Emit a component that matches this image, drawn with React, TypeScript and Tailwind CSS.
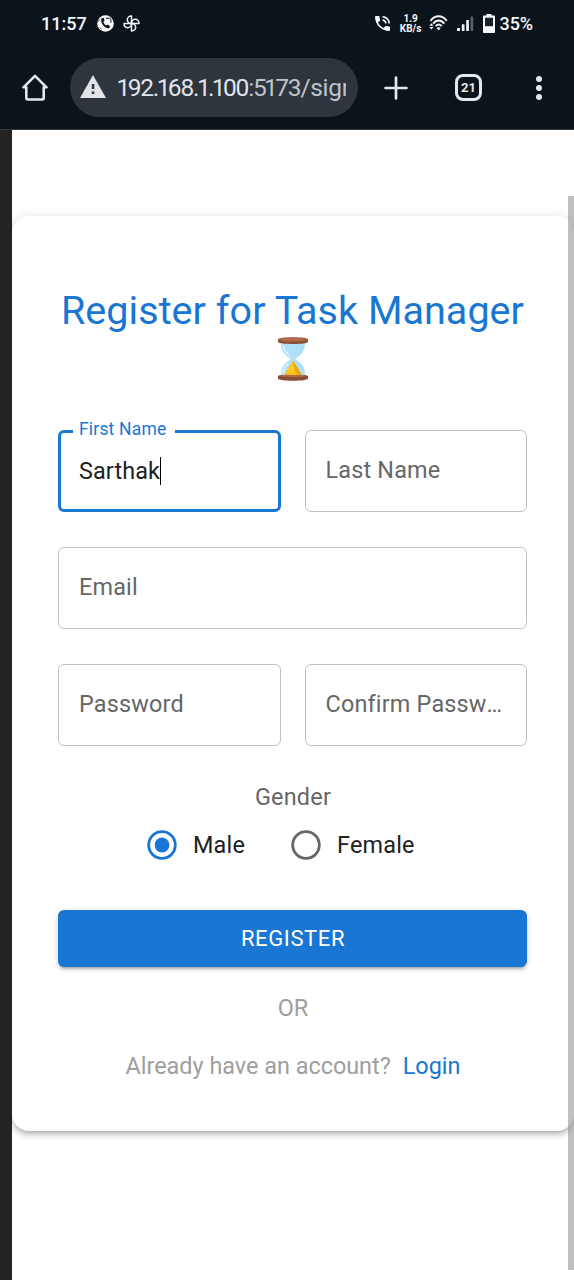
import React from "react";

function StatusBar() {
  return (
    <div className="flex h-[48px] items-center pl-[41px] pr-[41px] text-[#f4f6f8]">
      <span className="text-[18px] font-medium leading-none">11:57</span>
      <svg className="ml-[10px] -mt-px" width="17" height="17" viewBox="0 0 17 17">
        <circle cx="8.5" cy="8.5" r="8.3" fill="#f8fafb" />
        <path d="M4.300 3.500c-.8 4.600 2.500 9.200 7.500 10l1.400-2.200-2.600-1.800-1.400.9C7.700 9.500 6.800 8.200 6.400 6.900l1.200-1.100-1-3z" fill="#0c141b" />
        <path d="M8.700 3.200h3.600c1 0 1.600.7 1.600 1.600v2.900" fill="none" stroke="#0c141b" strokeWidth="1" />
        <path d="M1.500 6.500l1.200-2M3 12.600l1.500 1.600" stroke="#0c141b" strokeWidth=".8" />
      </svg>
      <svg className="ml-[9px] -mt-px" width="17" height="17" viewBox="0 0 17 17" fill="none" stroke="#f4f6f8" strokeWidth="1.5" strokeLinejoin="round">
        <path d="M8.500 8.500V1C5.800 1 4.300 2.900 4.300 4.700c0 1.900 1.700 3.800 4.200 3.800z" />
        <path d="M8.500 8.500H16c0-2.700-1.900-4.200-3.700-4.200-1.900 0-3.800 1.700-3.800 4.200z" />
        <path d="M8.500 8.500V16c2.700 0 4.200-1.900 4.200-3.700 0-1.900-1.700-3.800-4.200-3.800z" />
        <path d="M8.500 8.500H1c0 2.700 1.900 4.200 3.700 4.200 1.900 0 3.800-1.700 3.800-4.200z" />
      </svg>
      <svg className="ml-auto -mt-px" width="15" height="15" viewBox="3 3 18 18" fill="#f4f6f8">
        <path d="M20 15.500c-1.250 0-2.450-.2-3.570-.57-.1-.03-.21-.05-.31-.05-.26 0-.51.1-.71.29l-2.200 2.200c-2.830-1.440-5.150-3.750-6.590-6.590l2.200-2.210c.28-.26.36-.65.25-1C8.700 6.450 8.500 5.250 8.500 4c0-.55-.45-1-1-1H4c-.55 0-1 .45-1 1 0 9.390 7.610 17 17 17 .55 0 1-.45 1-1v-3.500c0-.55-.45-1-1-1zM19 12h2c0-4.970-4.030-9-9-9v2c3.870 0 7 3.130 7 7zm-4 0h2c0-2.760-2.240-5-5-5v2c1.660 0 3 1.340 3 3z" />
      </svg>
      <span className="ml-[10px] flex w-[22px] flex-col items-center text-[10px] font-bold leading-[10.500px]">
        <span>1.9</span>
        <span>KB/s</span>
      </span>
      <svg className="ml-[7px] -mt-px" width="19" height="17" viewBox="0 0 19 17" fill="none" stroke="#f4f6f8" strokeWidth="2">
        <path d="M1.500 5.800C6-.2 13.200-.2 17.700 5.800" />
        <path d="M4.100 8.600c3.400-4.100 7.800-4.100 11.200 0" />
        <path d="M6.800 11.200c1.900-2.200 4-2.200 5.900 0" />
        <path d="M9.700 15.400l-2-2.500c1.200-.9 2.800-.9 4 0z" fill="#f4f6f8" stroke="none" />
        <path d="M.3 10.700l2.100-2.500 2.100 2.500zM.3 12l2.100 2.500L4.500 12z" fill="#f4f6f8" stroke="none" />
      </svg>
      <svg className="ml-[9px]" width="17" height="16" viewBox="0 0 17 16" fill="#f4f6f8">
        <rect y="12" width="3" height="3" rx=".5" />
        <rect x="4.800" y="8.300" width="2.700" height="6.700" rx=".5" />
        <rect x="9.200" y="4" width="2.700" height="11" rx=".5" />
        <rect x="13.600" y=".5" width="2.600" height="14.500" rx=".5" fill="#59616a" />
      </svg>
      <svg className="ml-[9px] -mt-px" width="12" height="19" viewBox="0 0 12 19">
        <path d="M3.500 0h5v1.500H11c.6 0 1 .4 1 1V18c0 .6-.4 1-1 1H1c-.6 0-1-.4-1-1V2.500c0-.6.4-1 1-1h2.500z" fill="#f8fafb" />
        <rect x="2" y="3.700" width="8" height="8.500" fill="#17212a" />
      </svg>
      <span className="ml-[5px] text-[18px] font-medium leading-none tracking-[-0.1px]">35%</span>
    </div>
  );
}

function One() {
  return <span className="-ml-[1.500px] -mr-[1.500px]">1</span>;
}

function Toolbar() {
  return (
    <div className="flex h-[81px] items-start pl-[22px] pr-[32px] pt-[10px]">
      <div className="flex h-[59px] items-center">
        <svg width="26" height="27" viewBox="0 0 26 27" fill="none" stroke="#e3e7ee" strokeWidth="2.600" strokeLinejoin="round">
          <path d="M1.500 13.300L13 1.800l11.500 11.500h-2.800v10.800c0 .8-.6 1.400-1.400 1.400H5.700c-.8 0-1.400-.6-1.400-1.400V13.300z" />
        </svg>
      </div>
      <div className="ml-[22px] flex h-[59px] w-[288px] items-center rounded-full bg-[#2e353c] pl-[10px]">
        <svg className="-mt-[2px]" width="26" height="23" viewBox="0 0 26 23">
          <path d="M13 0l13 23H0z" fill="#e1e3e7" />
          <path d="M11.800 9h2.500v5h-2.500zM11.800 16.400h2.500V19h-2.500z" fill="#2e353c" />
        </svg>
        <div className="ml-[11px] w-[229px] overflow-hidden whitespace-nowrap pl-px text-[24.500px] leading-[34px] tracking-[-1.150px] text-[#e0e4ee]">
          <One />92.<One />68.<One />.<One />00<span className="text-[#bfc4cc]">:5<One />73<span className="tracking-[-0.3px]">/sign</span></span>
        </div>
      </div>
      <div className="ml-[26px] flex h-[59px] items-center">
        <svg width="24" height="24" viewBox="0 0 24 24" stroke="#e3e7ee" strokeWidth="2.700" strokeLinecap="round">
          <path d="M12 1.500v21M1.500 12h21" />
        </svg>
      </div>
      <div className="ml-[47px] flex h-[59px] items-center">
        <div className="flex h-[27px] w-[27px] items-center justify-center rounded-[8px] border-[3px] border-[#e3e7ee] text-[13px] font-bold text-[#e3e7ee]">21</div>
      </div>
      <div className="ml-auto flex h-[59px] flex-col items-center justify-center gap-[3px]">
        <i className="h-[6px] w-[6px] rounded-full bg-[#e3e7ee]" />
        <i className="h-[6px] w-[6px] rounded-full bg-[#e3e7ee]" />
        <i className="h-[6px] w-[6px] rounded-full bg-[#e3e7ee]" />
      </div>
    </div>
  );
}

function Hourglass() {
  return (
    <svg className="-mt-[2px]" width="30" height="44" viewBox="0 0 30 44">
      <path d="M3 4h24c.5 8-2.500 14-9.500 17.500v1C24.500 26 27.500 31 27 40H3c-.5-9 2.500-14 9.500-17.500v-1C5.500 18 2.500 12 3 4z" fill="#b0dff9" />
      <path d="M5.300 8c.5 5 2.500 8 6 10.500M5.300 36c.3-5 2.200-7.500 5.200-9.500" fill="none" stroke="#dcf1fd" strokeWidth="2" />
      <path d="M15 23.500L6.500 37c3 2 14 2 17 0z" fill="#fcc81f" />
      <path d="M15 23.500L17.500 38c2.500-.1 5-.4 6-1z" fill="#e9a91c" />
      <path d="M0 2.500C0-.4 30-.4 30 2.500V5c0 2.600-30 2.600-30 0z" fill="#8b4d34" />
      <ellipse cx="15" cy="2.600" rx="14.300" ry="1.900" fill="#b06a47" />
      <path d="M0 39c2-2 28-2 30 0v2.500c0 3-30 3-30 0z" fill="#8b4d34" />
      <path d="M1 38.800c2-1.500 26-1.500 28 0-2 1.700-26 1.700-28 0z" fill="#b06a47" />
      <path d="M7 37c3-1.300 13-1.300 16 0-3 1.300-13 1.300-16 0z" fill="#f7bd1d" />
    </svg>
  );
}

function Field({ label }: { label: string }) {
  return (
    <div className="flex h-[82px] min-w-0 flex-1 items-center rounded-[6px] border border-[#c0c0c0] px-[20px] pb-[2px]">
      <span className="truncate text-[23.400px] leading-[34px] tracking-[0.19px] text-[#666]">{label}</span>
    </div>
  );
}

function Radio({ label, checked }: { label: string; checked?: boolean }) {
  return (
    <label className="flex items-center">
      <svg width="30" height="30" viewBox="0 0 30 30">
        <circle cx="15" cy="15" r="13.300" fill="none" stroke={checked ? "#1976d2" : "#666"} strokeWidth="2.800" />
        {checked && <circle cx="15" cy="15" r="7.400" fill="#1976d2" />}
      </svg>
      <span className="ml-[16px] text-[23.400px] leading-[34px] tracking-[0.2px] text-[#212121]">{label}</span>
    </label>
  );
}

export default function App() {
  return (
    <div className="flex h-[1280px] w-[574px] flex-col overflow-hidden bg-white font-['Roboto',sans-serif]">
      <header className="h-[129px] shrink-0 bg-[#0c141b]">
        <StatusBar />
        <Toolbar />
      </header>
      <div className="relative flex flex-1 border-t border-[#353a3f]">
        <div className="w-[12px] shrink-0 bg-[#242323]" />
        <main className="flex-1 overflow-hidden pt-[86px]">
          <form className="flex h-[915px] w-[562px] flex-col rounded-[17px] bg-white pl-[46px] pr-[47px] pt-[70px] shadow-[0px_4px_4px_-3px_rgba(0,0,0,0.2),0px_4px_6px_0px_rgba(0,0,0,0.14),0px_1px_12px_0px_rgba(0,0,0,0.12)]">
            <h1 className="flex flex-col items-center whitespace-nowrap text-[39.500px] leading-[49px] text-[#1976d2]">
              <span className="tracking-[0.04px]">Register for Task Manager</span>
              <span className="flex h-[49px] items-center"><Hourglass /></span>
            </h1>
            <div className="mt-[46px] flex gap-[24px]">
              <div className="relative flex h-[82px] min-w-0 flex-1 items-center rounded-[6px] border-[3px] border-[#1976d2] px-[18px]">
                <span className="absolute -top-[16px] left-[12px] bg-white pl-[6px] pr-[9px] text-[17.500px] leading-[24px] tracking-[0.18px] text-[#1976d2]">First Name</span>
                <span className="text-[23.400px] leading-[34px] tracking-[0.1px] text-[#212121]">Sarthak</span>
                <i className="h-[28px] w-px bg-black" />
              </div>
              <Field label="Last Name" />
            </div>
            <div className="mt-[35px] flex"><Field label="Email" /></div>
            <div className="mt-[35px] flex gap-[24px]">
              <Field label="Password" />
              <Field label="Confirm Password" />
            </div>
            <div className="mt-[34px] pl-px text-center text-[23.400px] leading-[34px] tracking-[0.22px] text-[#666]">Gender</div>
            <div className="mt-[14px] flex gap-[46px] pl-[89px]">
              <Radio label="Male" checked />
              <Radio label="Female" />
            </div>
            <button type="button" className="mt-[48px] flex h-[57px] shrink-0 items-center justify-center rounded-[6px] bg-[#1976d2] pl-px text-[22px] tracking-[0.6px] text-white shadow-[0px_4px_2px_-3px_rgba(0,0,0,0.2),0px_3px_3px_0px_rgba(0,0,0,0.14),0px_1px_7px_0px_rgba(0,0,0,0.12)]">REGISTER</button>
            <div className="mt-[24px] pl-px text-center text-[23.400px] leading-[34px] text-[#9e9e9e]">OR</div>
            <div className="mt-[24px] flex justify-center gap-[12px] whitespace-nowrap pl-px text-[23.400px] leading-[34px] text-[#9e9e9e]">
              <span>Already have an account?</span>
              <a className="text-[#1976d2]">Login</a>
            </div>
          </form>
        </main>
        <div className="absolute right-0 top-[66px] h-[1074px] w-[6px] bg-[#808080]/50" />
      </div>
    </div>
  );
}
